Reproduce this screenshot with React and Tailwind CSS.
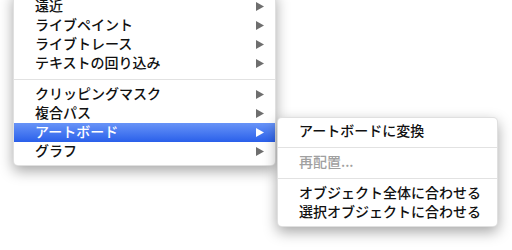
import React from "react";

const mainItems = [
    { label: "遠近" },
    { label: "ライブペイント" },
    { label: "ライブトレース" },
    { label: "テキストの回り込み" },
    { sep: true },
    { label: "クリッピングマスク" },
    { label: "複合パス" },
    { label: "アートボード", active: true },
    { label: "グラフ" },
];

const subItems = [
    { label: "アートボードに変換" },
    { sep: true },
    { label: "再配置...", disabled: true },
    { sep: true },
    { label: "オブジェクト全体に合わせる" },
    { label: "選択オブジェクトに合わせる" },
];

function Arrow({ active }) {
    return (
        <svg width="8" height="9" viewBox="0 0 8 9" className="shrink-0">
            <polygon points="0,0 8,4.5 0,9" fill={active ? "#ffffff" : "#6e6e6e"} />
        </svg>
    );
}

function Separator() {
    return (
        <div className="h-[12px] flex items-center">
            <div className="h-px w-full bg-[#e2e2e2]" />
        </div>
    );
}

function MenuRow({ item, arrow }) {
    const base = "h-[19px] leading-[19px] flex items-center justify-between pl-[21px] pr-[11px] text-[14px] font-medium whitespace-nowrap";
    if (item.active) {
        return (
            <div className={`${base} text-white bg-gradient-to-b from-[#6893f7] to-[#2a5fea]`}>
                <span className="-mt-[2px]">{item.label}</span>
                {arrow && <Arrow active />}
            </div>
        );
    }
    return (
        <div className={`${base} ${item.disabled ? "text-[#a0a0a0]" : "text-[#111111]"}`}>
            <span className="-mt-[2px]">{item.label}</span>
            {arrow && <Arrow />}
        </div>
    );
}

export default function App() {
    return (
        <div
            className="relative w-[512px] h-[250px] bg-white overflow-hidden"
            style={{ fontFamily: '"Noto Sans CJK JP", "Noto Sans", sans-serif' }}
        >
            <div className="absolute left-[13px] top-[-8px] w-[263px] bg-white rounded-b-[5px] py-[4px] border border-[rgba(0,0,0,0.12)] shadow-[0_5px_14px_rgba(0,0,0,0.35)]">
                {mainItems.map((item, i) =>
                    item.sep ? <Separator key={i} /> : <MenuRow key={i} item={item} arrow />
                )}
            </div>

            <div className="absolute left-[277px] top-[117px] w-[221px] bg-white rounded-[5px] py-[4px] border border-[rgba(0,0,0,0.12)] shadow-[0_5px_14px_rgba(0,0,0,0.35)]">
                {subItems.map((item, i) =>
                    item.sep ? <Separator key={i} /> : <MenuRow key={i} item={item} />
                )}
            </div>
        </div>
    );
}
